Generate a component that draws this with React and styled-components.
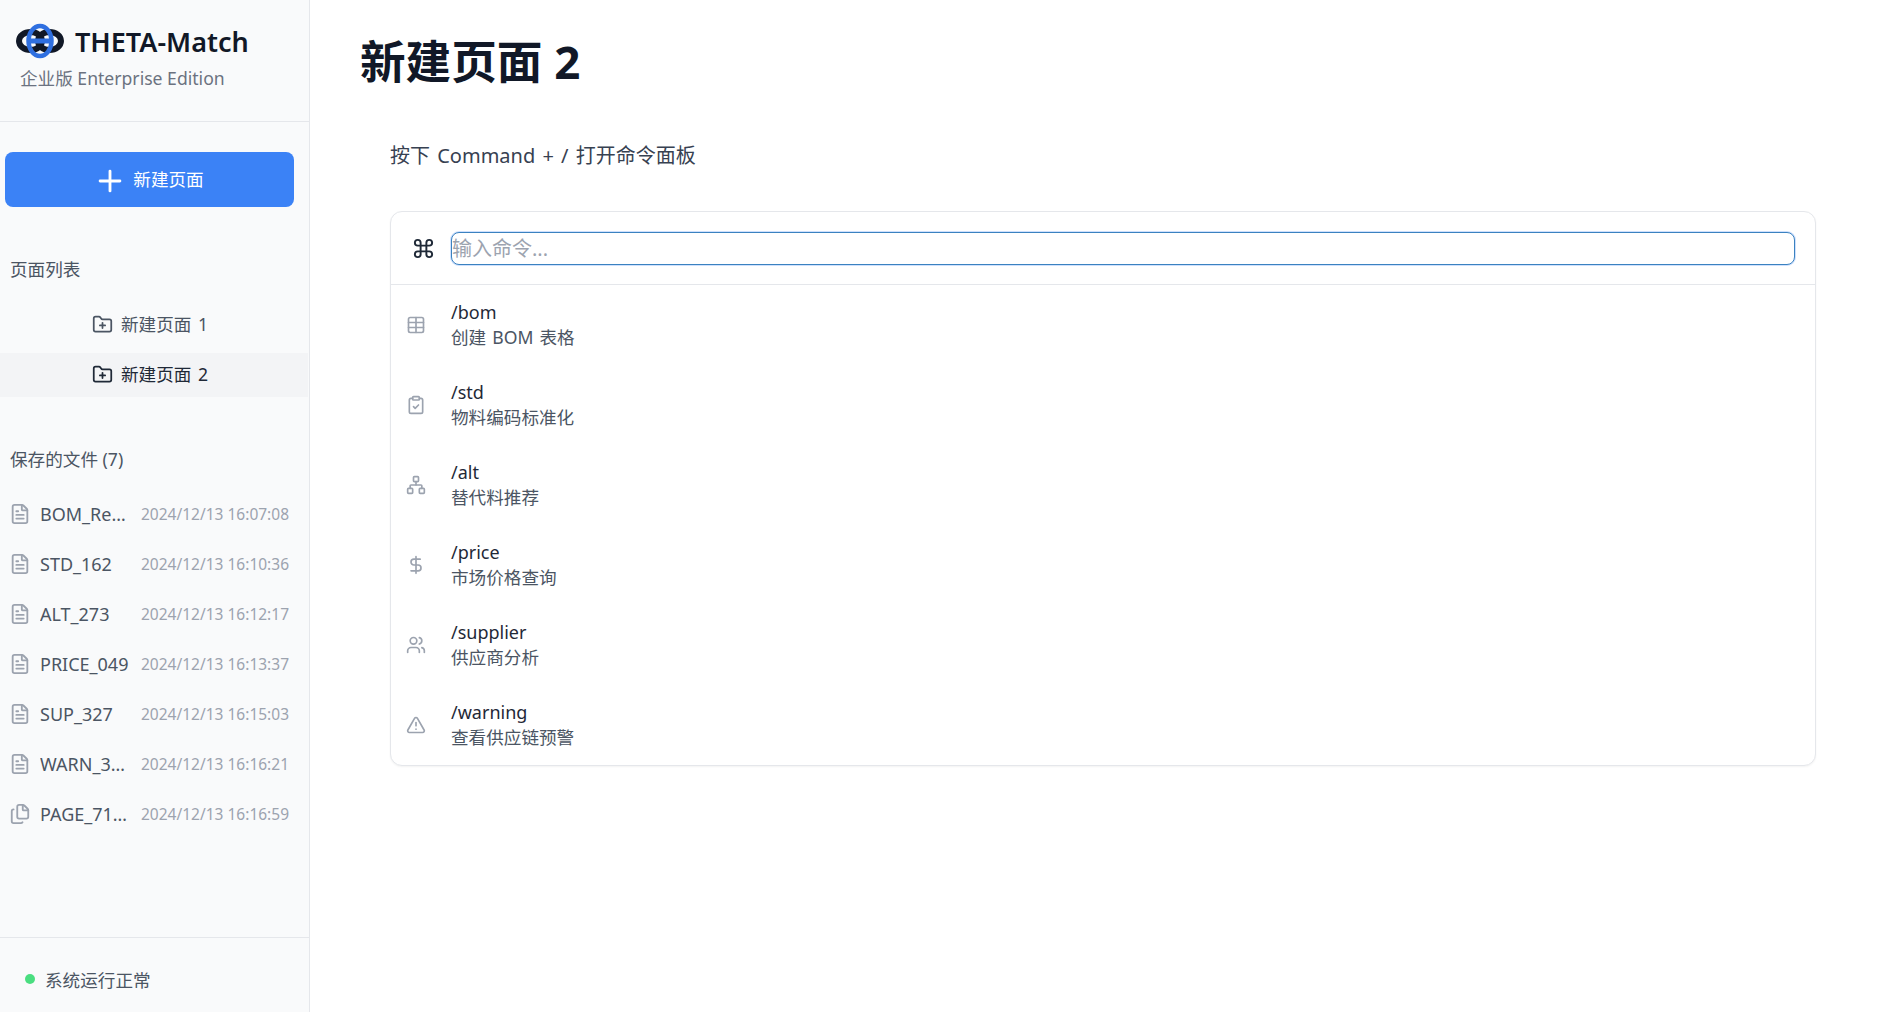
import React from 'react';
import styled, { createGlobalStyle } from 'styled-components';
import {
  Plus,
  FolderPlus,
  FileText,
  Files,
  Command,
  Table,
  ClipboardCheck,
  Network,
  DollarSign,
  Users,
  TriangleAlert,
} from 'lucide-react';

const GlobalStyle = createGlobalStyle`
  html, body {
    margin: 0;
    padding: 0;
    height: 100%;
    background: #fff;
    font-family: "Noto Sans", "Noto Sans CJK SC", sans-serif;
  }
  * { box-sizing: border-box; }
`;

const Page = styled.div`
  display: flex;
  width: 1900px;
  height: 1012px;
  overflow: hidden;
`;

const Sidebar = styled.aside`
  width: 310px;
  flex: none;
  display: flex;
  flex-direction: column;
  background: #f9fafb;
  border-right: 1px solid #e5e7eb;
`;

const Brand = styled.header`
  height: 122px;
  flex: none;
  padding: 21px 16px 0;
  border-bottom: 1px solid #e5e7eb;
`;

const BrandRow = styled.div`
  display: flex;
  align-items: center;
  gap: 11px;
  height: 40px;
`;

const BrandName = styled.div`
  font-size: 27px;
  font-weight: 600;
  color: #111827;
  white-space: nowrap;
`;

const BrandSub = styled.div`
  margin: 4px 0 0 4px;
  font-size: 17.6px;
  line-height: 26px;
  color: #6b7280;
`;

const NewButton = styled.button`
  display: flex;
  align-items: center;
  justify-content: center;
  gap: 6px;
  width: 289px;
  height: 55px;
  margin: 30px 0 0 5px;
  padding: 0 2px 2px 0;
  border: none;
  border-radius: 8px;
  background: #3b82f6;
  color: #fff;
  font: inherit;
  font-size: 17.6px;
`;

const PlusIcon = styled(Plus)`
  margin-top: 4px;
`;

const SectionTitle = styled.div`
  padding-left: 10px;
  font-size: 17.6px;
  line-height: 26px;
  color: #4b5563;
`;

const PageSection = styled.section`
  margin-top: 49px;
`;

const PageList = styled.div`
  margin-top: 21px;
  display: flex;
  flex-direction: column;
  gap: 6px;
`;

const PageItem = styled.div`
  display: flex;
  align-items: center;
  justify-content: center;
  gap: 8px;
  width: 308px;
  height: 44px;
  padding: 0 8px 3px 0;
  font-size: 17.6px;
  word-spacing: 2px;
  color: ${(p) => (p.$active ? '#1f2937' : '#4b5563')};
  background: ${(p) => (p.$active ? '#f3f4f6' : 'transparent')};
`;

const FolderIcon = styled(FolderPlus)`
  margin-top: 2px;
`;

const FileSection = styled.section`
  margin-top: 49px;
  flex: 1;
`;

const FileList = styled.div`
  margin-top: 18px;
`;

const FileRow = styled.div`
  display: flex;
  align-items: center;
  height: 50px;
  padding: 0 20px 2px 9px;
`;

const FileName = styled.span`
  width: 89px;
  margin-left: 9px;
  flex: none;
  overflow: hidden;
  white-space: nowrap;
  text-overflow: ellipsis;
  font-size: 18px;
  color: #4b5563;
`;

const FileDate = styled.span`
  margin-left: auto;
  font-size: 15.5px;
  white-space: nowrap;
  color: #9ca3af;
`;

const StatusBar = styled.footer`
  height: 75px;
  flex: none;
  display: flex;
  align-items: center;
  gap: 10px;
  padding: 8px 0 0 25px;
  border-top: 1px solid #e5e7eb;
  font-size: 17.6px;
  color: #4b5563;
`;

const StatusDot = styled.span`
  width: 10px;
  height: 10px;
  border-radius: 50%;
  background: #4ade80;
`;

const Main = styled.main`
  flex: 1;
  min-width: 0;
  padding: 29px 84px 0 50px;
`;

const Title = styled.h1`
  margin: 0;
  font-size: 45.6px;
  line-height: 64px;
  font-weight: 700;
  color: #111827;
`;

const Content = styled.div`
  margin: 48px 0 0 30px;
`;

const Hint = styled.p`
  margin: 0;
  font-size: 20px;
  line-height: 30px;
  word-spacing: 2px;
  color: #374151;
`;

const Card = styled.div`
  margin-top: 40px;
  border: 1px solid #e5e7eb;
  border-radius: 12px;
  background: #fff;
  box-shadow: 0 1px 2px rgba(0, 0, 0, 0.05);
`;

const CommandBar = styled.div`
  display: flex;
  align-items: center;
  gap: 16px;
  height: 73px;
  padding: 0 20px 0 21px;
  border-bottom: 1px solid #e5e7eb;
`;

const CommandInput = styled.input`
  flex: 1;
  height: 33px;
  padding: 0;
  border: 1px solid #3b82c0;
  border-radius: 8px;
  outline: none;
  box-shadow: 0 0 0 1px rgba(59, 130, 246, 0.25);
  font: inherit;
  font-size: 20px;
  color: #111827;
  &::placeholder {
    color: #9ca3af;
  }
`;

const CommandRow = styled.div`
  display: flex;
  align-items: center;
  height: 80px;
  padding-left: 15px;
  color: #9ca3af;
`;

const CommandText = styled.div`
  margin-left: 25px;
`;

const CommandName = styled.div`
  font-size: 18px;
  line-height: 25px;
  color: #1f2937;
`;

const CommandDesc = styled.div`
  font-size: 17.6px;
  line-height: 25px;
  word-spacing: 1.5px;
  color: #4b5563;
`;

const Logo = () => (
  <svg width="48" height="36" viewBox="0 0 48 36" fill="none">
    <ellipse cx="14.5" cy="18" rx="11.5" ry="9" stroke="#111827" strokeWidth="6" />
    <ellipse cx="33.5" cy="18" rx="11.5" ry="9" stroke="#111827" strokeWidth="6" />
    <ellipse cx="24" cy="18" rx="11.5" ry="15" stroke="#2f6fe0" strokeWidth="4.5" />
    <path d="M12 18h24" stroke="#2f6fe0" strokeWidth="5" />
  </svg>
);

const pages = [
  { name: '新建页面 1' },
  { name: '新建页面 2', active: true },
];

const files = [
  { name: 'BOM_Result', date: '2024/12/13 16:07:08', icon: FileText },
  { name: 'STD_162', date: '2024/12/13 16:10:36', icon: FileText },
  { name: 'ALT_273', date: '2024/12/13 16:12:17', icon: FileText },
  { name: 'PRICE_049', date: '2024/12/13 16:13:37', icon: FileText },
  { name: 'SUP_327', date: '2024/12/13 16:15:03', icon: FileText },
  { name: 'WARN_3842', date: '2024/12/13 16:16:21', icon: FileText },
  { name: 'PAGE_7185', date: '2024/12/13 16:16:59', icon: Files },
];

const commands = [
  { name: '/bom', desc: '创建 BOM 表格', icon: Table },
  { name: '/std', desc: '物料编码标准化', icon: ClipboardCheck },
  { name: '/alt', desc: '替代料推荐', icon: Network },
  { name: '/price', desc: '市场价格查询', icon: DollarSign },
  { name: '/supplier', desc: '供应商分析', icon: Users },
  { name: '/warning', desc: '查看供应链预警', icon: TriangleAlert },
];

const App = () => {
  return (
    <Page>
      <GlobalStyle />
      <Sidebar>
        <Brand>
          <BrandRow>
            <Logo />
            <BrandName>THETA-Match</BrandName>
          </BrandRow>
          <BrandSub>企业版 Enterprise Edition</BrandSub>
        </Brand>
        <NewButton>
          <PlusIcon size={34} strokeWidth={2} />
          新建页面
        </NewButton>
        <PageSection>
          <SectionTitle>页面列表</SectionTitle>
          <PageList>
            {pages.map((page) => (
              <PageItem key={page.name} $active={page.active}>
                <FolderIcon size={21} />
                {page.name}
              </PageItem>
            ))}
          </PageList>
        </PageSection>
        <FileSection>
          <SectionTitle>保存的文件 (7)</SectionTitle>
          <FileList>
            {files.map((file) => (
              <FileRow key={file.name}>
                <file.icon size={22} color="#9ca3af" />
                <FileName>{file.name}</FileName>
                <FileDate>{file.date}</FileDate>
              </FileRow>
            ))}
          </FileList>
        </FileSection>
        <StatusBar>
          <StatusDot />
          系统运行正常
        </StatusBar>
      </Sidebar>
      <Main>
        <Title>新建页面 2</Title>
        <Content>
          <Hint>按下 Command + / 打开命令面板</Hint>
          <Card>
            <CommandBar>
              <Command size={23} color="#1f2937" />
              <CommandInput placeholder="输入命令..." />
            </CommandBar>
            {commands.map((cmd) => (
              <CommandRow key={cmd.name}>
                <cmd.icon size={20} />
                <CommandText>
                  <CommandName>{cmd.name}</CommandName>
                  <CommandDesc>{cmd.desc}</CommandDesc>
                </CommandText>
              </CommandRow>
            ))}
          </Card>
        </Content>
      </Main>
    </Page>
  );
};

export default App;
